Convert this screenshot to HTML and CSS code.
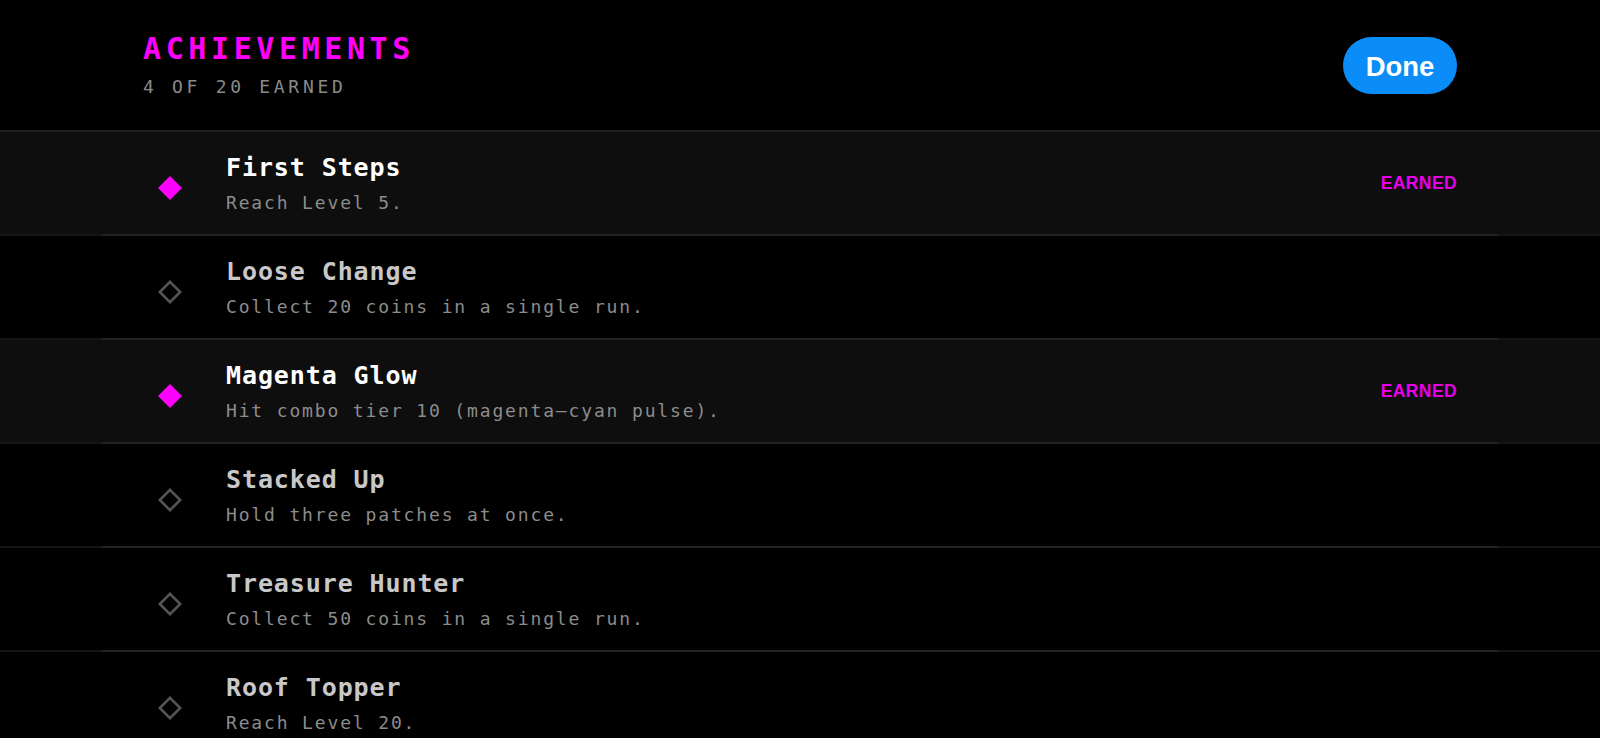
FILE: index.html
```html
<!DOCTYPE html>
<html>
<head>
<meta charset="utf-8">
<link rel="stylesheet" href="styles.css">
</head>
<body>
<header class="header">
  <div class="heading">
    <h1 class="title">ACHIEVEMENTS</h1>
    <div class="subtitle">4 OF 20 EARNED</div>
  </div>
  <button class="done">Done</button>
</header>
<ul class="list">
  <li class="row earned"><div class="row-inner">
    <span class="icon"><svg width="24" height="24" viewBox="0 0 24 24"><polygon points="12,0 24,12 12,24 0,12" fill="#ff00ff"/></svg></span>
    <div class="text"><div class="name">First Steps</div><div class="desc">Reach Level 5.</div></div>
    <span class="badge">EARNED</span>
  </div></li>
  <li class="row"><div class="row-inner">
    <span class="icon"><svg width="24" height="24" viewBox="0 0 24 24"><polygon points="12,1.8 22.2,12 12,22.2 1.8,12" fill="none" stroke="#555" stroke-width="2.6"/></svg></span>
    <div class="text"><div class="name">Loose Change</div><div class="desc">Collect 20 coins in a single run.</div></div>
  </div></li>
  <li class="row earned"><div class="row-inner">
    <span class="icon"><svg width="24" height="24" viewBox="0 0 24 24"><polygon points="12,0 24,12 12,24 0,12" fill="#ff00ff"/></svg></span>
    <div class="text"><div class="name">Magenta Glow</div><div class="desc">Hit combo tier 10 (magenta–cyan pulse).</div></div>
    <span class="badge">EARNED</span>
  </div></li>
  <li class="row"><div class="row-inner">
    <span class="icon"><svg width="24" height="24" viewBox="0 0 24 24"><polygon points="12,1.8 22.2,12 12,22.2 1.8,12" fill="none" stroke="#555" stroke-width="2.6"/></svg></span>
    <div class="text"><div class="name">Stacked Up</div><div class="desc">Hold three patches at once.</div></div>
  </div></li>
  <li class="row"><div class="row-inner">
    <span class="icon"><svg width="24" height="24" viewBox="0 0 24 24"><polygon points="12,1.8 22.2,12 12,22.2 1.8,12" fill="none" stroke="#555" stroke-width="2.6"/></svg></span>
    <div class="text"><div class="name">Treasure Hunter</div><div class="desc">Collect 50 coins in a single run.</div></div>
  </div></li>
  <li class="row"><div class="row-inner">
    <span class="icon"><svg width="24" height="24" viewBox="0 0 24 24"><polygon points="12,1.8 22.2,12 12,22.2 1.8,12" fill="none" stroke="#555" stroke-width="2.6"/></svg></span>
    <div class="text"><div class="name">Roof Topper</div><div class="desc">Reach Level 20.</div></div>
  </div></li>
</ul>
</body>
</html>
```
FILE: styles.css
```css
html, body {
  margin: 0;
  padding: 0;
  background: #000;
  height: 738px;
  overflow: hidden;
}
body {
  font-family: "DejaVu Sans Mono", "Liberation Mono", monospace;
  color: #fff;
}
.header {
  height: 130px;
  border-bottom: 2px solid #1f1f1f;
  display: flex;
  align-items: flex-start;
  justify-content: space-between;
  padding: 0 143px;
  box-sizing: content-box;
}
.heading {
  padding-top: 31px;
}
.title {
  margin: 0;
  font-size: 30px;
  line-height: 36px;
  font-weight: bold;
  letter-spacing: 4.6px;
  color: #ff00ff;
}
.subtitle {
  margin-top: 9px;
  font-size: 18px;
  line-height: 22px;
  letter-spacing: 3.7px;
  color: #8a8a8a;
}
.done {
  margin-top: 37px;
  width: 114px;
  height: 57px;
  border: none;
  border-radius: 29px;
  background: #0a8df8;
  color: #fff;
  font-family: "Liberation Sans", Arial, sans-serif;
  font-weight: bold;
  font-size: 27.5px;
  padding: 2px 0 0;
}
.list {
  list-style: none;
  margin: 0;
  padding: 0;
}
.row {
  height: 104px;
  background-image: linear-gradient(#151515, #151515);
  background-repeat: no-repeat;
  background-position: bottom;
  background-size: 100% 2px;
}
.row.earned {
  background-color: #0e0e0e;
}
.row-inner {
  margin: 0 102px;
  height: 102px;
  border-bottom: 2px solid #232323;
  padding: 0 41px 0 40px;
  display: flex;
  align-items: center;
}
.icon {
  width: 56px;
  display: flex;
  justify-content: center;
  padding-top: 10px;
  margin-right: 28px;
}
.icon svg {
  display: block;
}
.text {
  flex: 1;
  padding-top: 0;
}
.name {
  font-size: 25px;
  line-height: 32px;
  font-weight: bold;
  letter-spacing: 0.9px;
  color: #c8c8c8;
}
.earned .name {
  color: #fff;
}
.desc {
  margin-top: 7px;
  font-size: 18px;
  line-height: 24px;
  letter-spacing: 1.85px;
  color: #8c8c8c;
}
.badge {
  font-family: "Liberation Sans", Arial, sans-serif;
  font-weight: bold;
  font-size: 17.5px;
  letter-spacing: 0.4px;
  color: #e600e6;
  padding-top: 1px;
}
```
